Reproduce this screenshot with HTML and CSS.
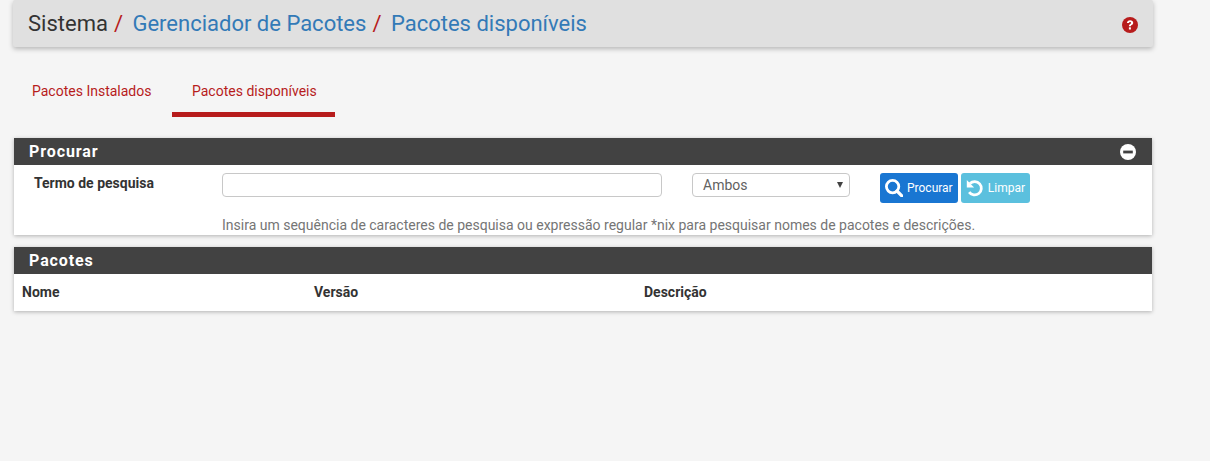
FILE: index.html
```html
<!DOCTYPE html>
<html lang="pt">
<head>
<meta charset="utf-8">
<title>Pacotes disponíveis</title>
<link rel="stylesheet" href="styles.css">
</head>
<body>
<div class="page">
  <header class="pagehead">
    <h1 class="crumbs">
      <span class="crumb">Sistema</span><span class="sep">/</span>
      <a class="crumb link" href="#">Gerenciador de Pacotes</a><span class="sep">/</span>
      <a class="crumb link" href="#">Pacotes disponíveis</a>
    </h1>
    <svg class="help" viewBox="0 0 16 16" width="16" height="16" aria-hidden="true">
      <circle cx="8" cy="8" r="8" fill="#b71c1c"/>
      <path d="M4.9 6.1C5 4.3 6.3 3.2 8.1 3.2c1.8 0 3.1 1.1 3.1 2.6 0 1.2-.7 1.8-1.5 2.3-.6.4-.8.6-.8 1.2H6.9c0-1.2.4-1.8 1.2-2.3.6-.4 1-.7 1-1.1 0-.5-.4-.8-1-.8-.7 0-1.1.4-1.2 1z" fill="#fff"/>
      <rect x="6.9" y="10.3" width="2" height="2.2" fill="#fff"/>
    </svg>
  </header>

  <nav class="tabs">
    <a class="tab tab-first" href="#">Pacotes Instalados</a>
    <a class="tab active" href="#">Pacotes disponíveis</a>
  </nav>

  <section class="panel">
    <div class="panel-head">
      <h2 class="panel-title">Procurar</h2>
      <svg class="collapse" viewBox="0 0 16 16" width="16" height="16" aria-hidden="true">
        <circle cx="8" cy="8" r="8" fill="#fff"/>
        <rect x="3.2" y="6.6" width="9.6" height="2.8" fill="#424242"/>
      </svg>
    </div>
    <div class="search">
      <div class="search-row">
        <label class="search-label" for="term">Termo de pesquisa</label>
        <input class="search-input" id="term" type="text">
        <div class="select">Ambos<span class="caret"></span></div>
        <div class="actions">
          <button class="btn btn-primary" type="button">
            <svg viewBox="0 0 18 18" width="18" height="18" aria-hidden="true">
              <circle cx="7.6" cy="7.6" r="6.2" fill="none" stroke="#fff" stroke-width="2.8"/>
              <path d="M12 12l4.8 4.8" stroke="#fff" stroke-width="3.2" stroke-linecap="round"/>
            </svg>Procurar
          </button>
          <button class="btn btn-info" type="button">
            <svg viewBox="0 0 18 18" width="18" height="18" aria-hidden="true">
              <path d="M4 4.4A6.8 6.8 0 1 1 3.2 13.2" fill="none" stroke="#fff" stroke-width="2.8"/>
              <path d="M.8 1v7.4h7.4z" fill="#fff"/>
            </svg>Limpar
          </button>
        </div>
      </div>
      <p class="hint">Insira um sequência de caracteres de pesquisa ou expressão regular *nix para pesquisar nomes de pacotes e descrições.</p>
    </div>
  </section>

  <section class="panel">
    <div class="panel-head">
      <h2 class="panel-title">Pacotes</h2>
    </div>
    <div class="cols">
      <span class="col col-name">Nome</span>
      <span class="col col-version">Versão</span>
      <span class="col">Descrição</span>
    </div>
  </section>
</div>
</body>
</html>
```
FILE: styles.css
```css
* { box-sizing: border-box; }
html, body { margin: 0; height: 100%; }
body {
  background: #f5f5f5;
  color: #333;
  font-family: Roboto, "Liberation Sans", sans-serif;
  font-size: 14px;
  overflow: hidden;
}
.page { width: 1166px; padding: 0 13px; }

.pagehead {
  height: 47px;
  background: #e0e0e0;
  border-radius: 2px;
  box-shadow: 0 2px 5px rgba(0, 0, 0, .26);
  display: flex;
  align-items: center;
  justify-content: space-between;
  padding: 0 15px;
}
.crumbs { margin: 0; font-size: 22px; font-weight: 400; line-height: 49px; white-space: nowrap; }
.crumb { color: #333; }
.link { color: #337ab7; text-decoration: none; }
.sep { color: #b71c1c; margin: 0 4px 0 6px; }
.help { display: block; margin-top: 2px; }

.tabs { display: flex; margin-top: 19px; height: 51px; }
.tab {
  padding: 16px 20px 0;
  width: 159px;
  color: #b71c1c;
  font-size: 14px;
  line-height: 18px;
  text-decoration: none;
  white-space: nowrap;
  border-bottom: 5px solid transparent;
}
.tab-first { padding-left: 19px; }
.tab.active { width: 163px; border-bottom-color: #b71c1c; }

.panel {
  margin: 21px 1px 0;
  background: #fff;
  box-shadow: 0 1px 4px rgba(0, 0, 0, .28);
}
.panel + .panel { margin-top: 12px; }
.panel-head {
  height: 27px;
  background: #424242;
  display: flex;
  align-items: center;
  justify-content: space-between;
  padding: 0 16px 0 15px;
}
.panel-title {
  margin: 0;
  color: #fff;
  font-size: 16px;
  font-weight: 700;
  letter-spacing: .9px;
  line-height: 28px;
}
.collapse { display: block; }

.search { height: 70px; }
.search-row { display: flex; align-items: flex-start; padding-top: 8px; height: 50px; }
.search-label { width: 208px; padding-left: 20px; font-weight: 700; font-size: 14px; line-height: 20px; color: #333; }
.search-input {
  width: 440px;
  height: 24px;
  border: 1px solid #c8c8c8;
  border-radius: 4px;
  background: #fff;
}
.select {
  position: relative;
  width: 158px;
  height: 24px;
  margin-left: 30px;
  padding-left: 10px;
  border: 1px solid #c8c8c8;
  border-radius: 4px;
  background: #fff;
  color: #616161;
  line-height: 22px;
  font-size: 14px;
}
.caret {
  position: absolute;
  right: 6px;
  top: 8px;
  border: 3px solid transparent;
  border-top: 6px solid #424242;
  border-bottom: 0;
}
.actions { display: flex; gap: 3px; margin-left: 30px; }
.btn {
  height: 30px;
  border: 0;
  border-radius: 3px;
  display: flex;
  align-items: center;
  color: #fff;
  font-family: inherit;
  font-size: 12px;
  padding: 0 5px;
  gap: 4px;
}
.btn svg { display: block; }
.btn-primary { width: 78px; background: #1976d2; }
.btn-info { width: 69px; background: #5bc0de; }
.hint {
  margin: 0;
  padding-left: 208px;
  color: #757575;
  font-size: 14px;
  line-height: 20px;
  white-space: nowrap;
}

.cols { display: flex; height: 37px; padding: 0 0 2px 8px; align-items: center; font-weight: 700; font-size: 14px; color: #333; }
.col-name { width: 292px; }
.col-version { width: 330px; }
```
